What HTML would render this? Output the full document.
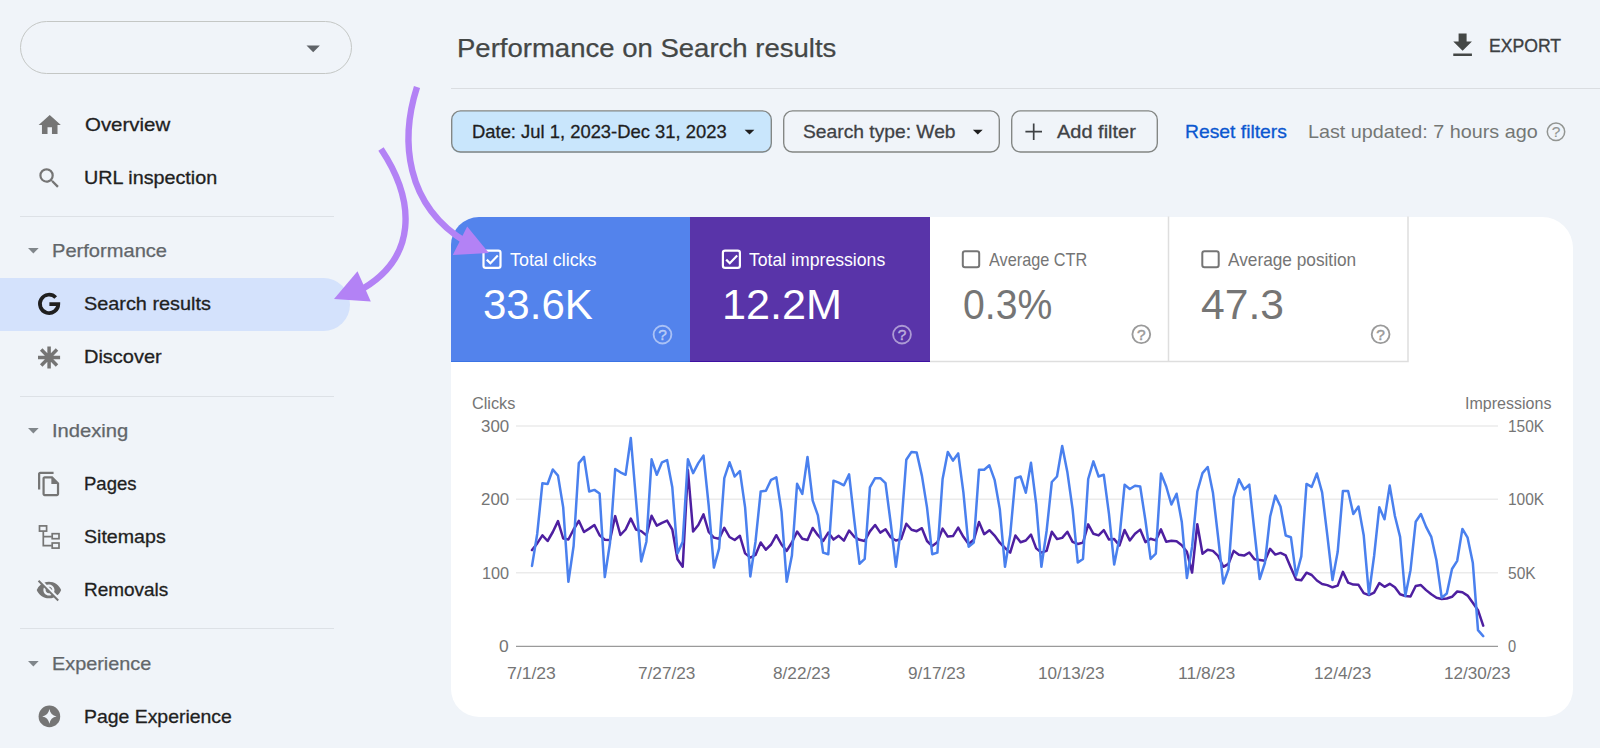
<!DOCTYPE html>
<html lang="en">
<head>
<meta charset="utf-8">
<title>Performance on Search results</title>
<style>
*{box-sizing:border-box;margin:0;padding:0}
html,body{width:1600px;height:748px;overflow:hidden}
body{background:#f0f4f9;font-family:"Liberation Sans",Arial,sans-serif;position:relative;color:#1f1f1f}
.abs{position:absolute}
.t{position:absolute;white-space:nowrap;line-height:1;transform-origin:0 0}
.prop{left:20px;top:21px;width:332px;height:53px;border:1px solid #c4c7c5;border-radius:27px}
.hr{left:20px;width:314px;height:1px;background:#dde1e6}
.sel{left:0;top:278px;width:350px;height:53px;background:#d4e2fc;border-radius:0 27px 27px 0}
.chip{top:110.500px;height:42px;border-radius:9px}
.card{left:451px;top:216.500px;width:1122px;height:500.500px;background:#fff;border-radius:28px 31px 28px 28px;overflow:hidden}
.tile{top:0;height:145.500px}
</style>
</head>
<body>
<!-- SIDEBAR -->
<div class="abs prop"></div>
<div class="abs sel"></div>
<div class="abs hr" style="top:215.500px"></div>
<div class="abs hr" style="top:395.500px"></div>
<div class="abs hr" style="top:627.500px"></div>
<div class="abs" style="left:451px;top:88px;width:1149px;height:1px;background:#dadde1"></div>

<!-- FILTER CHIPS -->
<div class="abs chip" style="left:451px;width:321px;background:#c9e6fc"></div>
<div class="abs chip" style="left:783px;width:217px"></div>
<div class="abs chip" style="left:1011px;width:147px"></div>

<!-- CARD -->
<div class="abs card">
  <div class="abs tile" style="left:0;width:239px;background:#5383ec;border-bottom:1.500px solid #3b74e4"></div>
  <div class="abs tile" style="left:239px;width:239.500px;background:#5934a9;border-bottom:1.500px solid #3d10a2"></div>
    </div>

<!-- TEXT -->
<div class="t" style="left:84.78px;top:115.69px;font-size:18.2px;color:#1f1f1f;transform:scaleX(1.1240);-webkit-text-stroke:.3px #1f1f1f;">Overview</div>
<div class="t" style="left:84.11px;top:168.89px;font-size:18.2px;color:#1f1f1f;transform:scaleX(1.0860);-webkit-text-stroke:.3px #1f1f1f;">URL inspection</div>
<div class="t" style="left:52.30px;top:241.59px;font-size:18.2px;color:#62666a;transform:scaleX(1.1049);-webkit-text-stroke:.25px #62666a;">Performance</div>
<div class="t" style="left:83.71px;top:294.99px;font-size:18.2px;color:#1f1f1f;transform:scaleX(1.0913);-webkit-text-stroke:.3px #1f1f1f;">Search results</div>
<div class="t" style="left:84.30px;top:348.29px;font-size:18.2px;color:#1f1f1f;transform:scaleX(1.0986);-webkit-text-stroke:.3px #1f1f1f;">Discover</div>
<div class="t" style="left:52.49px;top:421.59px;font-size:18.2px;color:#62666a;transform:scaleX(1.1090);-webkit-text-stroke:.25px #62666a;">Indexing</div>
<div class="t" style="left:84.38px;top:474.89px;font-size:18.2px;color:#1f1f1f;transform:scaleX(1.0180);-webkit-text-stroke:.3px #1f1f1f;">Pages</div>
<div class="t" style="left:83.72px;top:528.09px;font-size:18.2px;color:#1f1f1f;transform:scaleX(1.0773);-webkit-text-stroke:.3px #1f1f1f;">Sitemaps</div>
<div class="t" style="left:84.36px;top:581.29px;font-size:18.2px;color:#1f1f1f;transform:scaleX(1.0425);-webkit-text-stroke:.3px #1f1f1f;">Removals</div>
<div class="t" style="left:51.71px;top:654.59px;font-size:18.2px;color:#62666a;transform:scaleX(1.0911);-webkit-text-stroke:.25px #62666a;">Experience</div>
<div class="t" style="left:84.33px;top:707.59px;font-size:18.2px;color:#1f1f1f;transform:scaleX(1.0672);-webkit-text-stroke:.3px #1f1f1f;">Page Experience</div>
<div class="t" style="left:456.51px;top:34.95px;font-size:26.4px;color:#444746;transform:scaleX(1.0427);-webkit-text-stroke:.25px #444746;">Performance on Search results</div>
<div class="t" style="left:1489.42px;top:36.96px;font-size:18.0px;color:#3c4043;transform:scaleX(0.9781);-webkit-text-stroke:.35px #3c4043;">EXPORT</div>
<div class="t" style="left:472.20px;top:122.82px;font-size:18.4px;color:#1f1f1f;transform:scaleX(1.0004);-webkit-text-stroke:.3px #1f1f1f;">Date: Jul 1, 2023-Dec 31, 2023</div>
<div class="t" style="left:803.35px;top:122.82px;font-size:18.4px;color:#3f4245;transform:scaleX(1.0458);-webkit-text-stroke:.3px #3f4245;">Search type: Web</div>
<div class="t" style="left:1057.30px;top:122.82px;font-size:18.4px;color:#3f4245;transform:scaleX(1.0863);-webkit-text-stroke:.3px #3f4245;">Add filter</div>
<div class="t" style="left:1185.15px;top:122.82px;font-size:18.4px;color:#0b57d0;transform:scaleX(1.0500);-webkit-text-stroke:.3px #0b57d0;">Reset filters</div>
<div class="t" style="left:1308.34px;top:122.66px;font-size:18.6px;color:#747775;transform:scaleX(1.0628);">Last updated: 7 hours ago</div>
<div class="t" style="left:509.80px;top:250.66px;font-size:18.6px;color:#fff;transform:scaleX(0.9618);">Total clicks</div>
<div class="t" style="left:749.40px;top:250.66px;font-size:18.6px;color:#fff;transform:scaleX(0.9483);">Total impressions</div>
<div class="t" style="left:988.70px;top:250.56px;font-size:18.6px;color:#757575;transform:scaleX(0.8748);">Average CTR</div>
<div class="t" style="left:1228.20px;top:250.56px;font-size:18.6px;color:#757575;transform:scaleX(0.9277);">Average position</div>
<div class="t" style="left:482.56px;top:283.26px;font-size:43.4px;color:#fff;transform:scaleX(0.9685);">33.6K</div>
<div class="t" style="left:722.41px;top:283.26px;font-size:43.4px;color:#fff;transform:scaleX(0.9956);">12.2M</div>
<div class="t" style="left:962.60px;top:283.26px;font-size:43.4px;color:#757575;transform:scaleX(0.9021);">0.3%</div>
<div class="t" style="left:1200.62px;top:283.26px;font-size:43.4px;color:#757575;transform:scaleX(0.9829);">47.3</div>
<div class="t" style="left:471.58px;top:395.86px;font-size:16px;color:#757575;transform:scaleX(1.0171);">Clicks</div>
<div class="t" style="left:1465.20px;top:395.86px;font-size:16px;color:#757575;transform:scaleX(1.0024);">Impressions</div>
<div class="t" style="left:480.66px;top:418.09px;font-size:16.2px;color:#757575;transform:scaleX(1.0423);">300</div>
<div class="t" style="left:480.66px;top:491.29px;font-size:16.2px;color:#757575;transform:scaleX(1.0423);">200</div>
<div class="t" style="left:481.70px;top:564.79px;font-size:16.2px;color:#757575;transform:scaleX(1.0038);">100</div>
<div class="t" style="left:499.12px;top:638.29px;font-size:16.2px;color:#757575;transform:scaleX(1.0750);">0</div>
<div class="t" style="left:1508.24px;top:418.09px;font-size:16.2px;color:#757575;transform:scaleX(0.9556);">150K</div>
<div class="t" style="left:1508.24px;top:491.29px;font-size:16.2px;color:#757575;transform:scaleX(0.9556);">100K</div>
<div class="t" style="left:1507.64px;top:564.79px;font-size:16.2px;color:#757575;transform:scaleX(0.9593);">50K</div>
<div class="t" style="left:1507.50px;top:638.29px;font-size:16.2px;color:#757575;transform:scaleX(0.9000);">0</div>
<div class="t" style="left:507.09px;top:665.95px;font-size:16.6px;color:#757575;transform:scaleX(1.0600);">7/1/23</div>
<div class="t" style="left:637.96px;top:665.95px;font-size:16.6px;color:#757575;transform:scaleX(1.0370);">7/27/23</div>
<div class="t" style="left:772.96px;top:665.95px;font-size:16.6px;color:#757575;transform:scaleX(1.0370);">8/22/23</div>
<div class="t" style="left:908.46px;top:665.95px;font-size:16.6px;color:#757575;transform:scaleX(1.0370);">9/17/23</div>
<div class="t" style="left:1038.47px;top:665.95px;font-size:16.6px;color:#757575;transform:scaleX(1.0317);">10/13/23</div>
<div class="t" style="left:1178.44px;top:665.95px;font-size:16.6px;color:#757575;transform:scaleX(1.0566);">11/8/23</div>
<div class="t" style="left:1314.26px;top:665.95px;font-size:16.6px;color:#757575;transform:scaleX(1.0370);">12/4/23</div>
<div class="t" style="left:1443.97px;top:665.95px;font-size:16.6px;color:#757575;transform:scaleX(1.0317);">12/30/23</div>

<!-- ICONS + CHART (page coordinates) -->
<svg class="abs" style="left:0;top:0" width="1600" height="748" viewBox="0 0 1600 748">
  <!-- property dropdown caret -->
  <path fill="#5f6368" d="M306.500 45.500h13.400l-6.700 6.700z"/>
  <!-- section carets -->
  <g fill="#80868b">
    <path d="M28 248h10.700l-5.350 5.500z"/>
    <path d="M28 428h10.700l-5.350 5.500z"/>
    <path d="M28 661h10.700l-5.350 5.500z"/>
  </g>
  <!-- chip borders -->
  <g fill="none" stroke="#828583" stroke-width="1.350">
    <rect x="451.700" y="110.900" width="319.600" height="41.100" rx="8.800"/>
    <rect x="783.700" y="110.900" width="215.600" height="41.100" rx="8.800"/>
    <rect x="1011.700" y="110.900" width="145.600" height="41.100" rx="8.800"/>
  </g>
  <!-- chip carets -->
  <g fill="#1f1f1f">
    <path d="M744.600 129.700h9.800l-4.900 4.900z"/>
    <path d="M972.900 129.700h9.800l-4.900 4.900z"/>
  </g>
  <!-- sidebar icons (26.67px material icons) -->
  <g fill="#757575">
    <g transform="translate(36.400 111.700) scale(1.1111)"><path d="M10 20v-6h4v6h5v-8h3L12 3 2 12h3v8z"/></g>
    <g transform="translate(36 164.900) scale(1.1111)"><path d="M15.500 14h-.79l-.28-.27A6.471 6.471 0 0 0 16 9.500 6.500 6.500 0 1 0 9.500 16c1.610 0 3.090-.59 4.230-1.570l.27.28v.79l5 4.990L20.490 19l-4.990-5zm-6 0C7.010 14 5 11.990 5 9.500S7.010 5 9.500 5 14 7.010 14 9.500 11.990 14 9.500 14z"/></g>
    <g transform="translate(35.800 470.700) scale(1.1111)"><path d="M16 1H4c-1.100 0-2 .9-2 2v14h2V3h12V1zm-1 4H8c-1.100 0-1.990.9-1.990 2L6 21c0 1.100.89 2 1.990 2H19c1.100 0 2-.9 2-2V11l-6-6zM8 21V7h6v5h5v9H8z"/></g>
    <g transform="translate(35.600 576.700) scale(1.1111)"><path d="M12 7c2.760 0 5 2.240 5 5 0 .65-.13 1.260-.36 1.830l2.920 2.920c1.510-1.260 2.700-2.890 3.430-4.750-1.730-4.390-6-7.500-11-7.500-1.400 0-2.740.25-3.980.7l2.160 2.160C10.740 7.130 11.350 7 12 7zM2 4.270l2.280 2.280.46.460A11.804 11.804 0 0 0 1 12c1.730 4.390 6 7.500 11 7.500 1.550 0 3.030-.3 4.380-.84l.42.42L19.730 22 21 20.730 3.270 3 2 4.270zM7.530 9.800l1.550 1.550c-.05.210-.08.430-.08.650 0 1.660 1.340 3 3 3 .22 0 .44-.3.650-.08l1.550 1.550c-.67.330-1.410.53-2.200.53-2.760 0-5-2.240-5-5 0-.79.2-1.530.53-2.200zm4.310-.78l3.150 3.150.02-.16c0-1.660-1.340-3-3-3l-.17.010z"/></g>
    <circle cx="49.400" cy="716.400" r="10.800"/>
  </g>
  <path fill="#f0f4f9" d="M49.400 709c.7 4.300 3.100 6.700 7.200 7.400-4.100.7-6.500 3.100-7.200 7.400-.7-4.300-3.100-6.700-7.200-7.400 4.100-.7 6.500-3.100 7.200-7.400z"/>
  <!-- G logo -->
  <path fill="none" stroke="#1f1f1f" stroke-width="3.700" d="M55.700 297.500A9.200 9.200 0 1 0 58.300 304.100H49.400"/>
  <!-- Discover asterisk -->
  <g stroke="#757575" stroke-width="3.500">
    <path d="M49.100 346.400v22.100M38 357.500h22.100M41.200 349.600l15.800 15.800M41.200 365.400l15.800-15.800"/>
  </g>
  <!-- Sitemaps -->
  <g fill="none" stroke="#757575" stroke-width="1.700">
    <rect x="39.500" y="525.900" width="7.100" height="5.200"/>
    <rect x="52.200" y="533.700" width="6.800" height="5"/>
    <rect x="52.200" y="543" width="6.800" height="5.100"/>
    <path d="M43.300 531.500V545.600H51.800M43.300 536.600H51.800"/>
  </g>
  <!-- export icon (32px) -->
  <g transform="translate(1446.600 29.400) scale(1.3333)" fill="#444746"><path d="M19 9h-4V3H9v6H5l7 7 7-7zM5 18v2h14v-2H5z"/></g>
  <!-- add filter plus -->
  <path stroke="#3f4245" stroke-width="1.700" fill="none" d="M1033.700 123.500v16.500M1025.400 131.700h16.600"/>
  <!-- help icons -->
  <g fill="none" stroke-width="1.850">
    <circle cx="1556" cy="131.800" r="8.700" stroke="#929592" stroke-width="1.500"/>
    <circle cx="662.500" cy="334.600" r="8.900" stroke="#fff" stroke-opacity=".5"/>
    <circle cx="902" cy="334.600" r="8.900" stroke="#fff" stroke-opacity=".5"/>
    <circle cx="1141.300" cy="334.300" r="8.900" stroke="#9a9a9a"/>
    <circle cx="1380.600" cy="334.300" r="8.900" stroke="#9a9a9a"/>
  </g>
  <g font-family="Liberation Sans, Arial, sans-serif" font-size="15.500" text-anchor="middle" stroke-width=".450">
    <text x="1556" y="137.300" fill="#929592" stroke="#929592" stroke-width=".150">?</text>
    <text x="662.500" y="340.100" fill="#fff" fill-opacity=".5" stroke="#fff" stroke-opacity=".5">?</text>
    <text x="902" y="340.100" fill="#fff" fill-opacity=".5" stroke="#fff" stroke-opacity=".5">?</text>
    <text x="1141.300" y="339.800" fill="#9a9a9a" stroke="#9a9a9a">?</text>
    <text x="1380.600" y="339.800" fill="#9a9a9a" stroke="#9a9a9a">?</text>
  </g>
  <!-- checkboxes -->
  <g fill="none" stroke-width="2.200">
    <rect x="483.500" y="250.600" width="17" height="17.300" rx="2.200" stroke="#fff"/>
    <path d="M486.800 259.600l3.600 3.600 7.400-7.600" stroke="#fff"/>
    <rect x="722.900" y="250.600" width="17" height="17.300" rx="2.200" stroke="#fff"/>
    <path d="M726.200 259.600l3.600 3.600 7.400-7.600" stroke="#fff"/>
    <rect x="962.800" y="251.200" width="16.400" height="16" rx="2.200" stroke="#757575" stroke-width="2"/>
    <rect x="1202.300" y="251.200" width="16.400" height="16" rx="2.200" stroke="#757575" stroke-width="2"/>
  </g>

  <!-- tile borders -->
  <g stroke="#dedede" stroke-width="1.500" fill="none">
    <path d="M1168.500 216.500V362M1408 216.500V362.300M930 361.600H1408.700"/>
  </g>
  <!-- chart -->
  <g stroke="#ebebeb" stroke-width="1.500">
    <line x1="516" x2="1498" y1="426" y2="426"/>
    <line x1="516" x2="1498" y1="499.300" y2="499.300"/>
    <line x1="516" x2="1498" y1="572.700" y2="572.700"/>
  </g>
  <line x1="516" x2="1498" y1="646.300" y2="646.300" stroke="#9a9a9a" stroke-width="1.300"/>
  <polyline fill="none" stroke="#4e1fa0" stroke-width="2.500" stroke-linejoin="round" stroke-linecap="round" points="532.0,550.1 537.2,543.4 542.4,535.4 547.6,541.0 552.8,532.0 558.0,521.1 563.2,538.5 568.4,539.5 573.6,529.5 578.8,520.8 584.0,532.0 589.2,528.6 594.4,525.0 599.6,535.3 604.8,539.7 610.0,540.0 615.2,516.1 620.4,535.0 625.6,529.5 630.8,518.6 636.0,529.5 641.2,531.1 646.4,535.4 651.6,515.8 656.8,525.6 662.0,522.8 667.1,520.6 672.3,529.5 677.5,559.3 682.7,566.8 687.9,470.0 693.1,531.6 698.3,525.0 703.5,514.4 708.7,532.0 713.9,537.6 719.1,538.8 724.3,527.8 729.5,537.0 734.7,540.0 739.9,535.8 745.1,553.4 750.3,557.6 755.5,555.0 760.7,542.5 765.9,549.7 771.1,544.5 776.3,535.2 781.5,544.5 786.7,550.9 791.9,542.5 797.1,531.6 802.3,538.7 807.5,540.0 812.7,528.0 817.9,535.2 823.1,541.0 828.3,532.6 833.5,539.6 838.7,535.8 843.9,540.6 849.1,530.5 854.3,536.8 859.5,539.8 864.7,541.0 869.9,531.4 875.1,525.0 880.3,532.6 885.5,529.3 890.7,537.2 895.9,540.5 901.1,539.1 906.3,523.8 911.5,529.8 916.7,531.2 921.9,528.2 927.0,541.0 932.2,546.0 937.4,542.2 942.6,528.6 947.8,536.6 953.0,536.1 958.2,527.6 963.4,536.8 968.6,544.0 973.8,539.8 979.0,522.0 984.2,534.2 989.4,530.2 994.6,535.6 999.8,542.7 1005.0,548.0 1010.2,552.6 1015.4,535.5 1020.6,542.2 1025.8,540.5 1031.0,534.6 1036.2,548.4 1041.4,552.6 1046.6,550.9 1051.8,531.8 1057.0,539.1 1062.2,537.9 1067.4,531.8 1072.6,541.8 1077.8,544.0 1083.0,542.6 1088.2,524.4 1093.4,533.8 1098.6,535.4 1103.8,530.2 1109.0,539.6 1114.2,539.1 1119.4,545.5 1124.6,530.0 1129.8,540.4 1135.0,533.8 1140.2,529.6 1145.4,542.1 1150.6,538.7 1155.8,540.4 1161.0,529.4 1166.2,541.7 1171.4,540.8 1176.6,541.3 1181.8,545.2 1186.9,551.7 1192.1,572.6 1197.3,524.2 1202.5,553.7 1207.7,549.7 1212.9,550.9 1218.1,555.9 1223.3,566.8 1228.5,563.8 1233.7,550.9 1238.9,554.7 1244.1,555.6 1249.3,552.5 1254.5,559.2 1259.7,560.0 1264.9,560.8 1270.1,548.8 1275.3,554.6 1280.5,552.9 1285.7,555.4 1290.9,567.7 1296.1,579.6 1301.3,580.2 1306.5,572.7 1311.7,575.0 1316.9,580.5 1322.1,584.0 1327.3,585.1 1332.5,587.3 1337.7,585.6 1342.9,571.9 1348.1,582.6 1353.3,584.6 1358.5,584.8 1363.7,593.1 1368.9,595.1 1374.1,592.6 1379.3,583.1 1384.5,586.8 1389.7,583.8 1394.9,587.3 1400.1,594.3 1405.3,596.0 1410.5,596.5 1415.7,586.0 1420.9,585.1 1426.1,590.1 1431.3,594.3 1436.5,597.7 1441.7,599.0 1446.8,598.5 1452.0,596.8 1457.2,591.5 1462.4,592.3 1467.6,595.6 1472.8,602.7 1478.0,610.2 1483.2,625.6"/>
  <polyline fill="none" stroke="#4a80ee" stroke-width="2.500" stroke-linejoin="round" stroke-linecap="round" points="532.0,565.9 537.2,534.0 542.4,483.2 547.6,484.0 552.8,469.5 558.0,475.6 563.2,507.4 568.4,581.8 573.6,546.0 578.8,463.1 584.0,456.9 589.2,491.5 594.4,489.9 599.6,493.5 604.8,577.1 610.0,543.0 615.2,469.0 620.4,472.3 625.6,474.8 630.8,438.0 636.0,499.5 641.2,561.4 646.4,541.7 651.6,459.3 656.8,474.8 662.0,462.3 667.1,460.1 672.3,487.3 677.5,553.4 682.7,541.7 687.9,459.3 693.1,473.1 698.3,463.1 703.5,455.6 708.7,505.5 713.9,567.6 719.1,548.4 724.3,478.2 729.5,462.3 734.7,476.5 739.9,471.1 745.1,507.4 750.3,576.5 755.5,541.7 760.7,491.5 765.9,490.7 771.1,479.8 776.3,477.3 781.5,511.6 786.7,581.8 791.9,555.6 797.1,483.7 802.3,494.0 807.5,456.9 812.7,500.7 817.9,515.3 823.1,552.6 828.3,554.2 833.5,480.7 838.7,482.7 843.9,485.3 849.1,474.3 854.3,520.3 859.5,563.8 864.7,558.9 869.9,487.3 875.1,478.2 880.3,478.2 885.5,483.2 890.7,523.0 895.9,566.8 901.1,528.0 906.3,459.8 911.5,451.9 916.7,452.6 921.9,475.6 927.0,507.4 932.2,554.2 937.4,552.6 942.6,479.0 947.8,451.9 953.0,460.6 958.2,453.4 963.4,492.4 968.6,546.7 973.8,542.5 979.0,469.8 984.2,469.8 989.4,465.3 994.6,479.8 999.8,509.1 1005.0,566.8 1010.2,535.0 1015.4,478.2 1020.6,476.5 1025.8,492.7 1031.0,462.8 1036.2,504.1 1041.4,566.8 1046.6,531.0 1051.8,482.0 1057.0,476.5 1062.2,445.9 1067.4,472.3 1072.6,509.1 1077.8,562.6 1083.0,558.9 1088.2,479.0 1093.4,461.4 1098.6,476.5 1103.8,474.8 1109.0,514.1 1114.2,564.6 1119.4,538.4 1124.6,484.8 1129.8,489.0 1135.0,485.7 1140.2,486.5 1145.4,520.3 1150.6,558.9 1155.8,553.7 1161.0,473.5 1166.2,486.5 1171.4,504.5 1176.6,493.7 1181.8,522.0 1186.9,578.1 1192.1,546.7 1197.3,491.5 1202.5,473.1 1207.7,467.0 1212.9,492.4 1218.1,537.0 1223.3,583.5 1228.5,569.3 1233.7,497.4 1238.9,479.3 1244.1,489.4 1249.3,484.7 1254.5,532.0 1259.7,579.0 1264.9,563.0 1270.1,516.8 1275.3,495.6 1280.5,506.5 1285.7,535.5 1290.9,537.2 1296.1,575.6 1301.3,556.4 1306.5,483.9 1311.7,486.9 1316.9,473.5 1322.1,492.3 1327.3,535.2 1332.5,580.0 1337.7,551.8 1342.9,490.9 1348.1,490.9 1353.3,514.0 1358.5,506.5 1363.7,535.2 1368.9,594.3 1374.1,556.0 1379.3,507.3 1384.5,519.3 1389.7,485.6 1394.9,516.0 1400.1,536.9 1405.3,596.0 1410.5,570.2 1415.7,521.8 1420.9,514.0 1426.1,526.9 1431.3,536.9 1436.5,560.6 1441.7,597.7 1446.8,593.5 1452.0,569.0 1457.2,560.8 1462.4,528.9 1467.6,537.7 1472.8,562.7 1478.0,630.2 1483.2,636.1"/>

  <!-- annotation arrows -->
  <g fill="none" stroke="#b382f5" stroke-width="6.400">
    <path d="M417 87C400 140 405 205 466 242"/>
    <path d="M381 149C415 200 420 260 355 293"/>
  </g>
  <path fill="#b382f5" d="M488.900 253L467.200 226.500L452.800 254.900Z"/>
  <path fill="#b382f5" d="M334 299L357.500 271.300L370.800 301.400Z"/>
</svg>
</body>
</html>
